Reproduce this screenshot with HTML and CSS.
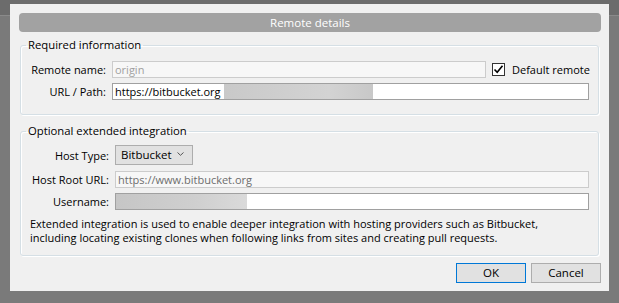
FILE: index.html
```html
<!DOCTYPE html>
<html>
<head>
<meta charset="utf-8">
<link rel="stylesheet" href="styles.css">
</head>
<body>
<div class="dialog">
  <div class="titlebar">Remote details</div>

  <fieldset class="group group-req">
    <legend>Required information</legend>
    <div class="form form-req">
      <span class="lbl">Remote name:</span>
      <div class="row">
        <div class="field disabled">origin</div>
        <div class="check">
          <span class="box"><svg width="11" height="11" viewBox="0 0 11 11"><path d="M1.5 5.5 L4.2 8.3 L9.5 1.8" fill="none" stroke="#000" stroke-width="1.6"/></svg></span>
          <span>Default remote</span>
        </div>
      </div>
      <span class="lbl">URL / Path:</span>
      <div class="field active"><span class="val">https://bitbucket.org</span><span class="redact redact-url"></span></div>
    </div>
  </fieldset>

  <fieldset class="group group-opt">
    <legend>Optional extended integration</legend>
    <div class="form form-opt">
      <span class="lbl">Host Type:</span>
      <div class="row">
        <div class="select">Bitbucket<svg class="chev" width="7" height="4" viewBox="0 0 7 4"><path d="M0.5 0.5 L3.5 3.3 L6.5 0.5" fill="none" stroke="#555" stroke-width="1"/></svg></div>
      </div>
      <span class="lbl">Host Root URL:</span>
      <div class="field disabled dark">https://www.bitbucket.org</div>
      <span class="lbl">Username:</span>
      <div class="field active user"><span class="redact redact-user"></span></div>
      <p class="desc">Extended integration is used to enable deeper integration with hosting providers such as Bitbucket,<br>including locating existing clones when following links from sites and creating pull requests.</p>
    </div>
  </fieldset>

  <div class="buttons">
    <button class="btn btn-default">OK</button>
    <button class="btn">Cancel</button>
  </div>
</div>
</body>
</html>
```

FILE: styles.css
```css
* { box-sizing: border-box; }
html, body {
  margin: 0;
  padding: 0;
}
body {
  background: linear-gradient(to bottom, #6c6c6c 0, #6c6c6c 15px, #8a8a8a 15px, #8a8a8a 16px, #7a7a7a 16px);
  width: 619px;
  height: 303px;
  padding-top: 4px;
  font-family: "Open Sans", "Noto Sans", sans-serif;
  font-size: 11px;
  color: #000;
  overflow: hidden;
}
.dialog {
  margin: 0 10px 0 10px;
  width: 599px;
  height: 287px;
  background: #f0f0f0;
  padding-top: 9px;
  display: flex;
  flex-direction: column;
}
.titlebar {
  margin: 0 8px 0 9px;
  height: 19px;
  background: #a2a2a2;
  border-radius: 4px;
  color: #fff;
  text-align: center;
  line-height: 19px;
  font-size: 11.5px;
}
.group {
  margin: 6px 10px 0 10px;
  padding: 0 9px 0 0;
  border: 1px solid #d5dfe5;
  border-radius: 3px;
  box-shadow: inset 1px 1px 0 #fff, 1px 1px 0 #fff;
  min-width: 0;
}
.group legend {
  margin-left: 5px;
  padding: 0 2px;
  line-height: 14px;
  font-size: 11.3px;
}
.group-req { padding-top: 9px; padding-bottom: 14px; }
.group-opt { margin-top: 9px; padding-top: 7px; padding-bottom: 10px; }

.form {
  display: grid;
  column-gap: 6px;
  row-gap: 5px;
  align-items: center;
}
.form-req { grid-template-columns: 85px 1fr; }
.form-opt { grid-template-columns: 88px 1fr; }
.lbl {
  text-align: right;
  white-space: nowrap;
  line-height: 15px;
}
.row {
  display: flex;
  align-items: center;
  gap: 6px;
}
.field {
  height: 17px;
  border: 1px solid #adadad;
  background: #fff;
  padding-left: 2px;
  line-height: 15px;
  white-space: nowrap;
  overflow: hidden;
  display: flex;
  align-items: stretch;
  flex: 1;
}
.field.disabled {
  background: #f7f7f7;
  border-color: #cccccc;
  color: #a0a0a0;
}
.field.disabled.dark { color: #6d6d6d; }
.field.active { border-color: #a0a0a0; }
.field.user { padding-left: 0; }
.val { flex: none; width: 109px; overflow: hidden; }
.redact {
  flex: none;
  background: linear-gradient(to right, #c9c9c9, #d3d3d3 70%, #c8c8c8);
}
.redact-url { width: 149px; }
.redact-user { width: 131px; background: linear-gradient(to right, #c6c6c6, #cfcfcf 60%, #dadada); }

.check {
  flex: none;
  width: 97px;
  display: flex;
  align-items: center;
  gap: 7px;
  white-space: nowrap;
  font-size: 11px;
}
.box {
  width: 13px;
  height: 13px;
  border: 1px solid #333;
  background: #fff;
  display: flex;
  align-items: center;
  justify-content: center;
  flex: none;
}
.select {
  width: 78px;
  height: 20px;
  background: #e1e1e1;
  border: 1px solid #adadad;
  padding-left: 5px;
  line-height: 18px;
  display: flex;
  align-items: center;
  justify-content: space-between;
  padding-right: 8px;
  margin-bottom: 1px;
  font-size: 11.5px;
}
.chev { margin-top: -2px; }
.desc {
  grid-column: 1 / -1;
  margin: 2px 0 0 9px;
  line-height: 14px;
  font-size: 11px;
  white-space: nowrap;
}
.buttons {
  display: flex;
  justify-content: flex-end;
  gap: 5px;
  margin: 7px 8px 0 0;
}
.btn {
  width: 70px;
  height: 20px;
  background: #e1e1e1;
  border: 1px solid #adadad;
  font-family: inherit;
  font-size: 11.5px;
  color: #000;
  padding: 0;
  line-height: 18px;
}
.btn-default { border-color: #0078d7; }
```
